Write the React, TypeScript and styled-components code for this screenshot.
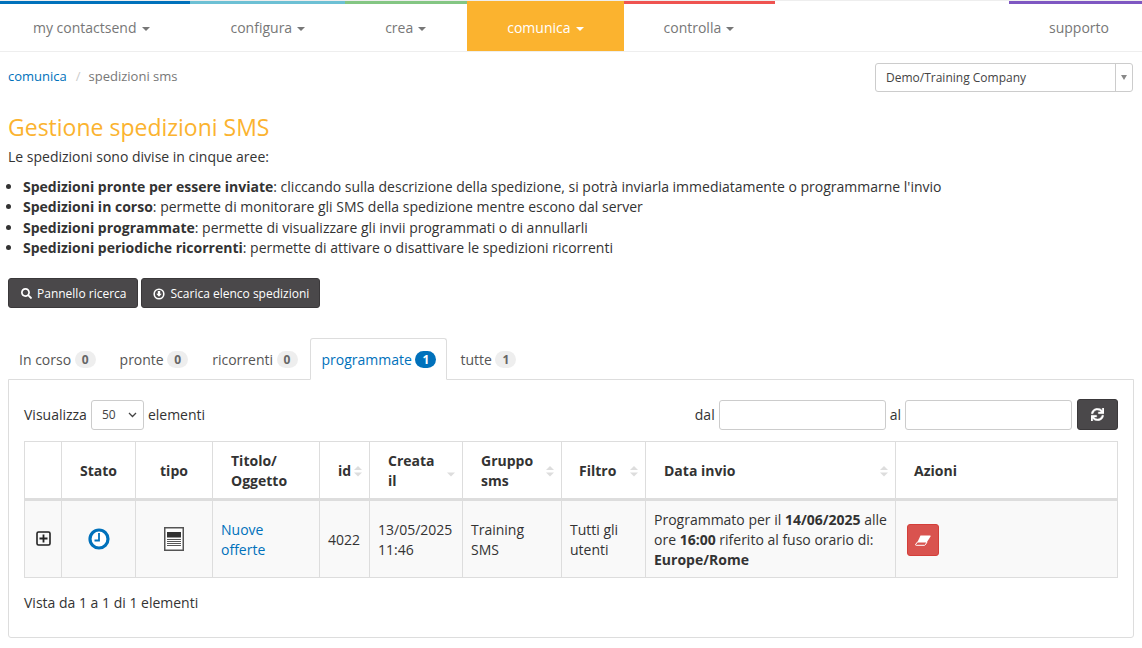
import React from 'react';
import styled, { createGlobalStyle } from 'styled-components';
import { FaSearch, FaSync } from 'react-icons/fa';

const GlobalStyle = createGlobalStyle`
  html, body {
    margin: 0;
    padding: 0;
    background: #fff;
    overflow: hidden;
  }
  body {
    font-family: 'Open Sans', 'Noto Sans', sans-serif;
    font-size: 14px;
    line-height: 20px;
    color: #333;
  }
  * { box-sizing: border-box; }
`;

type NavData = { label: string; color: string; caret?: boolean; active?: boolean };

const navLeft: NavData[] = [
  { label: 'my contactsend', color: '#0071bb', caret: true },
  { label: 'configura', color: '#6cc0d4', caret: true },
  { label: 'crea', color: '#84c683', caret: true },
  { label: 'comunica', color: '#fbb32f', caret: true, active: true },
  { label: 'controlla', color: '#ef5350', caret: true },
];

const tabs = [
  { label: 'In corso', count: 0 },
  { label: 'pronte', count: 0 },
  { label: 'ricorrenti', count: 0 },
  { label: 'programmate', count: 1, active: true },
  { label: 'tutte', count: 1 },
];

const Page = styled.div`
  width: 1142px;
  height: 648px;
  overflow: hidden;
`;

const Nav = styled.nav`
  display: flex;
  justify-content: space-between;
  height: 52px;
  margin: 0 -7px;
  border-top: 1px solid #eee;
  border-bottom: 1px solid #eee;
`;

const NavGroup = styled.div`
  display: flex;
`;

const NavItem = styled.a<{ $color: string; $active?: boolean }>`
  display: flex;
  align-items: center;
  gap: 5px;
  height: 50px;
  padding: 0 40px;
  margin-bottom: -1px;
  border-top: 3px solid ${(p) => p.$color};
  background: ${(p) => (p.$active ? p.$color : 'transparent')};
  color: ${(p) => (p.$active ? '#fff' : '#777')};
  font-size: 14px;

  &:first-child {
    gap: 6px;
  }

  &:nth-child(3),
  &:nth-child(5) {
    padding-right: 41px;
  }
`;

const Caret = styled.span`
  width: 0;
  height: 0;
  margin-top: 2px;
  border-top: 4px solid currentColor;
  border-left: 4px solid transparent;
  border-right: 4px solid transparent;
`;

const Content = styled.main`
  padding: 0 8px;
`;

const TopRow = styled.div`
  display: flex;
  justify-content: space-between;
  align-items: flex-start;
  height: 50px;
  padding-top: 11px;
`;

const Breadcrumb = styled.div`
  display: flex;
  gap: 8px;
  padding-top: 3px;
  font-size: 13px;
  color: #777;
`;

const Link = styled.a`
  color: #0071bb;
`;

const Slash = styled.span`
  color: #ccc;
  margin-left: 1px;
`;

const CompanySelect = styled.div`
  display: flex;
  justify-content: space-between;
  width: 258px;
  height: 29px;
  margin-right: 1px;
  border: 1px solid #ccc;
  border-radius: 3px;
  font-size: 12px;
  line-height: 28px;
  color: #444;
`;

const CompanyName = styled.span`
  padding-left: 10px;
`;

const CompanyArrow = styled.span`
  display: flex;
  align-items: center;
  justify-content: center;
  width: 17px;
  border-left: 1px solid #ccc;
  color: #888;
`;

const SmallCaret = styled(Caret)`
  margin-top: 0;
  border-top-width: 5px;
  border-left-width: 3px;
  border-right-width: 3px;
`;

const Title = styled.h1`
  margin: 10px 0 5px;
  font-size: 23px;
  font-weight: 400;
  line-height: 30px;
  color: #fbb32f;
`;

const Intro = styled.p`
  margin: 0 0 10px;
`;

const Bullets = styled.ul`
  margin: 0;
  padding: 0 0 0 15px;
  line-height: 20.4px;
`;

const Toolbar = styled.div`
  display: flex;
  gap: 3px;
  margin-top: 19px;
`;

const DarkButton = styled.button`
  display: inline-flex;
  align-items: center;
  gap: 5px;
  height: 30px;
  padding: 2px 11px 0 12px;
  border: 1px solid #3a383a;
  border-radius: 3px;
  background: #4a484a;
  color: #fff;
  font-family: inherit;
  font-size: 12px;
`;

const WideButton = styled(DarkButton)`
  padding: 2px 10px 0 11px;
`;

const TabBar = styled.div`
  display: flex;
  align-items: flex-end;
  gap: 2px;
  height: 42px;
  margin-top: 29px;
`;

const Tab = styled.div<{ $active?: boolean }>`
  display: flex;
  align-items: center;
  gap: 3.5px;
  height: 42px;
  padding: 2px 10px 0 ${(p) => (p.$active ? 11 : 10)}px;
  margin-bottom: -1px;
  margin-left: ${(p) => (p.$active ? -1 : 0)}px;
  position: relative;
  border: 1px solid ${(p) => (p.$active ? '#ddd' : 'transparent')};
  border-bottom-color: ${(p) => (p.$active ? '#fff' : 'transparent')};
  border-radius: 3px 3px 0 0;
  background: ${(p) => (p.$active ? '#fff' : 'transparent')};
  color: ${(p) => (p.$active ? '#0071bb' : '#555')};
`;

const Badge = styled.span<{ $active?: boolean }>`
  min-width: 21px;
  height: 17px;
  border-radius: 9px;
  background: ${(p) => (p.$active ? '#0071bb' : '#eee')};
  color: ${(p) => (p.$active ? '#fff' : '#666')};
  font-size: 12px;
  font-weight: 700;
  line-height: 17px;
  text-align: center;
`;

const Panel = styled.section`
  width: 1126px;
  height: 259px;
  padding: 20px 15px;
  border: 1px solid #ddd;
  border-radius: 0 0 3px 3px;
`;

const Controls = styled.div`
  display: flex;
  justify-content: space-between;
  align-items: center;
  height: 30px;
  margin-bottom: 11px;
`;

const ControlGroup = styled.div`
  display: flex;
  align-items: center;
  gap: 4px;
`;

const PageSize = styled.div`
  display: flex;
  align-items: center;
  justify-content: space-between;
  width: 53px;
  height: 30px;
  padding: 0 6px 0 10px;
  border: 1px solid #ccc;
  border-radius: 3px;
  font-size: 12px;
  color: #444;
`;

const DateInput = styled.input`
  width: 167px;
  height: 30px;
  padding: 0 10px;
  border: 1px solid #ccc;
  border-radius: 3px;
  background: #fff;
`;

const RefreshButton = styled.button`
  display: flex;
  align-items: center;
  justify-content: center;
  width: 41px;
  height: 31px;
  margin-left: 1px;
  border: 1px solid #3a383a;
  border-radius: 3px;
  background: #4a484a;
  color: #fff;
  font-size: 13px;
`;

const Table = styled.table`
  width: 1093px;
  table-layout: fixed;
  border-collapse: collapse;
  border: 1px solid #ddd;
`;

const Th = styled.th<{ $width: number; $center?: boolean; $pad?: number }>`
  position: relative;
  width: ${(p) => p.$width}px;
  height: 58px;
  padding: 3px ${(p) => p.$pad ?? 18}px 0;
  border: 1px solid #ddd;
  border-bottom: 3px solid #ddd;
  font-weight: 700;
  text-align: ${(p) => (p.$center ? 'center' : 'left')};
  vertical-align: middle;
`;

const Td = styled.td<{ $center?: boolean }>`
  height: 78px;
  padding: 3px 8px 0;
  border: 1px solid #ddd;
  background: #f9f9f9;
  text-align: ${(p) => (p.$center ? 'center' : 'left')};
  vertical-align: middle;
`;

const SortMark = styled.svg`
  position: absolute;
  right: 7px;
  top: 50%;
  width: 8px;
  height: 11px;
  margin-top: -4px;
  fill: #ddd;
`;

const IconSlot = styled.span`
  display: inline-flex;
  vertical-align: middle;
  margin-top: -5px;
`;

const EraseButton = styled.button`
  display: flex;
  align-items: center;
  justify-content: center;
  width: 32px;
  height: 32px;
  margin-left: 3px;
  border: 1px solid #d43f3a;
  border-radius: 3px;
  background: #d9534f;
`;

const Footer = styled.div`
  margin-top: 15px;
`;

const Sort = ({ upOnly }: { upOnly?: boolean }) => (
  <SortMark viewBox="0 0 8 11">
    {!upOnly && <path d="M4 0 L8 4 L0 4 Z" />}
    <path d="M0 6.5 L8 6.5 L4 10.5 Z" />
  </SortMark>
);

const DownloadIcon = () => (
  <svg width="12" height="12" viewBox="0 0 12 12">
    <circle cx="6" cy="6" r="4.8" fill="none" stroke="#fff" strokeWidth="1.6" />
    <path d="M4.8 3 H7.2 V5.8 H8.8 L6 8.8 L3.2 5.8 H4.8 Z" fill="#fff" />
  </svg>
);

const ExpandIcon = () => (
  <svg width="15" height="15" viewBox="0 0 15 15">
    <rect x="1" y="1" width="13" height="13" rx="1.5" fill="none" stroke="#222" strokeWidth="1.6" />
    <path d="M3.5 7.5 H11.5 M7.5 3.5 V11.5" stroke="#222" strokeWidth="1.8" />
  </svg>
);

const ClockIcon = () => (
  <svg width="22" height="22" viewBox="0 0 22 22">
    <circle cx="11" cy="11" r="9" fill="#fff" stroke="#0071bb" strokeWidth="3.2" />
    <path d="M11 5 V12.5 H6.5" fill="none" stroke="#0071bb" strokeWidth="1.8" />
  </svg>
);

const NewsletterIcon = () => (
  <svg width="20" height="24" viewBox="0 0 20 24">
    <rect x="0.75" y="0.75" width="18.5" height="22.5" fill="#fff" stroke="#555" strokeWidth="1.5" />
    <rect x="3" y="5" width="14" height="5.5" fill="#333" />
    <path d="M3 12.5 H17 M3 14.5 H17 M3 16.5 H17 M3 18.5 H17" stroke="#444" strokeWidth="0.9" />
  </svg>
);

const EraserIcon = () => (
  <svg width="16" height="11" viewBox="0 0 16 11">
    <path d="M5.5 0.5 H15 Q16 0.5 15.5 1.5 L12 7 H2.5 Z" fill="#fff" />
    <path d="M2.5 7 H12 L10.3 9.8 Q10 10.3 9.4 10.3 H1.2 Q0.2 10.3 0.7 9.3 Z" fill="none" stroke="#fff" strokeWidth="1" />
  </svg>
);

const App = () => (
  <Page>
    <GlobalStyle />
    <Nav>
      <NavGroup>
        {navLeft.map((item) => (
          <NavItem key={item.label} $color={item.color} $active={item.active}>
            {item.label}
            {item.caret && <Caret />}
          </NavItem>
        ))}
      </NavGroup>
      <NavItem $color="#7e57c2">supporto</NavItem>
    </Nav>

    <Content>
      <TopRow>
        <Breadcrumb>
          <Link>comunica</Link>
          <Slash>/</Slash>
          <span>spedizioni sms</span>
        </Breadcrumb>
        <CompanySelect>
          <CompanyName>Demo/Training Company</CompanyName>
          <CompanyArrow>
            <SmallCaret />
          </CompanyArrow>
        </CompanySelect>
      </TopRow>

      <Title>Gestione spedizioni SMS</Title>
      <Intro>Le spedizioni sono divise in cinque aree:</Intro>
      <Bullets>
        <li>
          <b>Spedizioni pronte per essere inviate</b>: cliccando sulla descrizione della spedizione, si potrà
          inviarla immediatamente o programmarne l'invio
        </li>
        <li>
          <b>Spedizioni in corso</b>: permette di monitorare gli SMS della spedizione mentre escono dal server
        </li>
        <li>
          <b>Spedizioni programmate</b>: permette di visualizzare gli invii programmati o di annullarli
        </li>
        <li>
          <b>Spedizioni periodiche ricorrenti</b>: permette di attivare o disattivare le spedizioni ricorrenti
        </li>
      </Bullets>

      <Toolbar>
        <DarkButton>
          <FaSearch size={11} />
          Pannello ricerca
        </DarkButton>
        <WideButton>
          <DownloadIcon />
          Scarica elenco spedizioni
        </WideButton>
      </Toolbar>

      <TabBar>
        {tabs.map((tab) => (
          <Tab key={tab.label} $active={tab.active}>
            {tab.label}
            <Badge $active={tab.active}>{tab.count}</Badge>
          </Tab>
        ))}
      </TabBar>

      <Panel>
        <Controls>
          <ControlGroup>
            Visualizza
            <PageSize>
              50
              <svg width="9" height="6" viewBox="0 0 9 6">
                <path d="M1 1 L4.5 4.5 L8 1" fill="none" stroke="#444" strokeWidth="1.3" />
              </svg>
            </PageSize>
            elementi
          </ControlGroup>
          <ControlGroup>
            dal
            <DateInput />
            al
            <DateInput />
            <RefreshButton>
              <FaSync stroke="currentColor" strokeWidth={15} />
            </RefreshButton>
          </ControlGroup>
        </Controls>

        <Table>
          <thead>
            <tr>
              <Th $width={37} />
              <Th $width={74} $center>Stato</Th>
              <Th $width={77} $center>tipo</Th>
              <Th $width={107}>Titolo/ Oggetto</Th>
              <Th $width={50}>
                id
                <Sort />
              </Th>
              <Th $width={93}>
                Creata il
                <Sort upOnly />
              </Th>
              <Th $width={99}>
                Gruppo sms
                <Sort />
              </Th>
              <Th $width={84} $pad={17}>
                Filtro
                <Sort />
              </Th>
              <Th $width={250}>
                Data invio
                <Sort />
              </Th>
              <Th $width={222}>Azioni</Th>
            </tr>
          </thead>
          <tbody>
            <tr>
              <Td $center>
                <IconSlot>
                  <ExpandIcon />
                </IconSlot>
              </Td>
              <Td $center>
                <IconSlot>
                  <ClockIcon />
                </IconSlot>
              </Td>
              <Td $center>
                <IconSlot>
                  <NewsletterIcon />
                </IconSlot>
              </Td>
              <Td>
                <Link>Nuove offerte</Link>
              </Td>
              <Td>4022</Td>
              <Td>13/05/2025 11:46</Td>
              <Td>Training SMS</Td>
              <Td>Tutti gli utenti</Td>
              <Td>
                Programmato per il <b>14/06/2025</b> alle ore <b>16:00</b> riferito al fuso orario di:{' '}
                <b>Europe/Rome</b>
              </Td>
              <Td>
                <EraseButton>
                  <EraserIcon />
                </EraseButton>
              </Td>
            </tr>
          </tbody>
        </Table>
        <Footer>Vista da 1 a 1 di 1 elementi</Footer>
      </Panel>
    </Content>
  </Page>
);

export default App;
